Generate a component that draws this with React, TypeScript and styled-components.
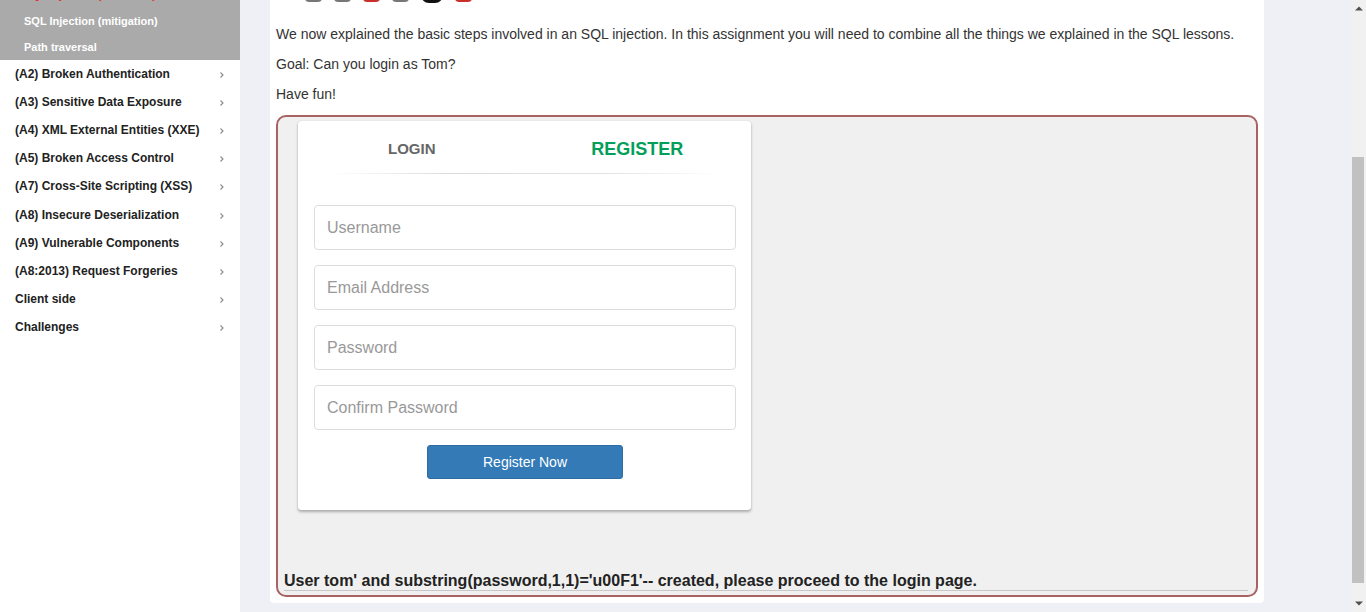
import React from "react";
import styled, { createGlobalStyle } from "styled-components";

const GlobalStyle = createGlobalStyle`
  html, body {
    margin: 0;
    padding: 0;
    overflow: hidden;
  }
  body {
    font-family: "Liberation Sans", Arial, sans-serif;
    background: #eff0f5;
  }
  * {
    box-sizing: border-box;
  }
`;

const Page = styled.div`
  display: flex;
  width: 1366px;
  height: 612px;
  overflow: hidden;
`;

const Sidebar = styled.nav`
  width: 240px;
  flex-shrink: 0;
  background: #fff;
`;

const SubMenu = styled.div`
  margin-top: -18px;
  background: #aaaaaa;
`;

const SubItem = styled.div<{ active?: boolean }>`
  height: 26px;
  line-height: 26px;
  padding-left: 24px;
  font-size: 11px;
  font-weight: 700;
  color: ${(p) => (p.active ? "#e32d2d" : "#fff")};
`;

const MenuItem = styled.div`
  display: flex;
  align-items: center;
  justify-content: space-between;
  height: 28.1px;
  padding: 0 15px 0 15px;
  font-size: 12px;
  font-weight: 700;
  color: #222;
`;

const Chevron = () => (
  <svg width="6" height="8" viewBox="0 0 6 8" style={{ marginTop: 2 }}>
    <polyline points="1.5,1.5 4,4 1.5,6.5" fill="none" stroke="#8a8a8a" strokeWidth="1.1" />
  </svg>
);

const Main = styled.main`
  flex: 1;
  background: #eff0f5;
  padding-left: 30px;
`;

const Panel = styled.section`
  width: 994px;
  background: #fff;
  border-radius: 0 0 4px 4px;
  padding: 0 6px 6px;
`;

const Pager = styled.div`
  display: flex;
  align-items: flex-start;
  gap: 12px;
  height: 24px;
  padding-left: 29px;
`;

const PageBtn = styled.span<{ tone: "gray" | "red" | "current" }>`
  display: block;
  width: ${(p) => (p.tone === "current" ? "22px" : "17px")};
  height: 20px;
  margin-top: ${(p) => (p.tone === "current" ? "-17px" : "-18px")};
  border-radius: ${(p) => (p.tone === "current" ? "8px" : "4px")};
  background: ${(p) =>
    p.tone === "red" ? "#c9302c" : p.tone === "current" ? "#c9302c" : "#777"};
  border: ${(p) => (p.tone === "current" ? "3px solid #111" : "none")};
`;

const Para = styled.p`
  margin: 0 0 10px;
  font-size: 14px;
  line-height: 20px;
  color: #333;
`;

const Attack = styled.div`
  display: flex;
  flex-direction: column;
  margin-top: 11px;
  width: 982px;
  height: 482px;
  border: 2px solid #a96262;
  border-radius: 10px;
  background: #f0f0f0;
  padding: 4px 6px 4px 6px;
`;

const Card = styled.div`
  width: 453px;
  height: 389px;
  margin-left: 14px;
  background: #fff;
  border-radius: 3px;
  box-shadow: 0 2px 3px rgba(0, 0, 0, 0.28), 0 0 1px rgba(0, 0, 0, 0.2);
  padding: 16px 15px 0 16px;
`;

const Tabs = styled.div`
  display: grid;
  grid-template-columns: 1fr 1fr;
  height: 22px;
  align-items: center;
  margin-right: -14px;
  margin-left: -15px;
`;

const Tab = styled.div<{ active?: boolean }>`
  text-align: center;
  font-weight: 700;
  font-size: ${(p) => (p.active ? "18px" : "15px")};
  color: ${(p) => (p.active ? "#029f5b" : "#666")};
  margin-top: ${(p) => (p.active ? "2px" : "0")};
`;

const Divider = styled.div`
  height: 1px;
  margin: 14px 16px 0 16px;
  background: linear-gradient(to right, rgba(0, 0, 0, 0), #dcdcdc 30%, #e2e2e2 70%, rgba(0, 0, 0, 0));
`;

const Form = styled.form`
  display: flex;
  flex-direction: column;
  gap: 15px;
  margin-top: 31px;
`;

const Input = styled.input`
  width: 422px;
  height: 45px;
  border: 1px solid #ddd;
  border-radius: 4px;
  padding: 0 12px;
  font-family: "Liberation Sans", Arial, sans-serif;
  font-size: 16px;
  color: #555;
  background: #fff;
  outline: none;
  &::placeholder {
    color: #999;
  }
`;

const Submit = styled.button`
  align-self: center;
  width: 196px;
  height: 34px;
  border: 1px solid #2e6da4;
  border-radius: 3px;
  background: #337ab7;
  color: #fff;
  font-family: "Liberation Sans", Arial, sans-serif;
  font-size: 14px;
  margin-top: 0;
`;

const Feedback = styled.div`
  margin-top: auto;
`;

const FeedbackText = styled.div`
  font-size: 16px;
  font-weight: 700;
  line-height: 18px;
  color: #222;
`;

const FeedbackRule = styled.div`
  height: 1px;
  margin-top: 0;
  margin-right: 2px;
  background: #c8c8c8;
`;

const ScrollRail = styled.div`
  display: flex;
  flex-direction: column;
  width: 15px;
  flex-shrink: 0;
  background: #f1f1f1;
`;

const RailButton = styled.div`
  display: flex;
  align-items: center;
  justify-content: center;
  height: 17px;
`;

const RailTrack = styled.div`
  flex: 1;
  display: flex;
  flex-direction: column;
  padding: 140px 2px 12px 1px;
`;

const Thumb = styled.div`
  flex: 1;
  background: #c1c1c1;
`;

const sideItems = [
  "(A2) Broken Authentication",
  "(A3) Sensitive Data Exposure",
  "(A4) XML External Entities (XXE)",
  "(A5) Broken Access Control",
  "(A7) Cross-Site Scripting (XSS)",
  "(A8) Insecure Deserialization",
  "(A9) Vulnerable Components",
  "(A8:2013) Request Forgeries",
  "Client side",
  "Challenges",
];

const pages: Array<"gray" | "red" | "current"> = ["gray", "gray", "red", "gray", "current", "red"];

export default function App() {
  return (
    <>
      <GlobalStyle />
      <Page>
        <Sidebar>
          <SubMenu>
            <SubItem active>SQL Injection (advanced)</SubItem>
            <SubItem>SQL Injection (mitigation)</SubItem>
            <SubItem>Path traversal</SubItem>
          </SubMenu>
          {sideItems.map((label) => (
            <MenuItem key={label}>
              <span>{label}</span>
              <Chevron />
            </MenuItem>
          ))}
        </Sidebar>

        <Main>
          <Panel>
            <Pager>
              {pages.map((tone, i) => (
                <PageBtn key={i} tone={tone} />
              ))}
            </Pager>
            <Para>
              We now explained the basic steps involved in an SQL injection. In this assignment you will
              need to combine all the things we explained in the SQL lessons.
            </Para>
            <Para>Goal: Can you login as Tom?</Para>
            <Para>Have fun!</Para>

            <Attack>
              <Card>
                <Tabs>
                  <Tab>LOGIN</Tab>
                  <Tab active>REGISTER</Tab>
                </Tabs>
                <Divider />
                <Form onSubmit={(e) => e.preventDefault()}>
                  <Input placeholder="Username" />
                  <Input placeholder="Email Address" />
                  <Input placeholder="Password" type="password" />
                  <Input placeholder="Confirm Password" type="password" />
                  <Submit type="submit">Register Now</Submit>
                </Form>
              </Card>
              <Feedback>
                <FeedbackText>
                  User tom' and substring(password,1,1)='u00F1'-- created, please proceed to the login page.
                </FeedbackText>
                <FeedbackRule />
              </Feedback>
            </Attack>
          </Panel>
        </Main>

        <ScrollRail>
          <RailButton>
            <svg width="8" height="5" viewBox="0 0 8 5">
              <polygon points="0,4.5 4,0.5 8,4.5" fill="#505050" />
            </svg>
          </RailButton>
          <RailTrack>
            <Thumb />
          </RailTrack>
          <RailButton>
            <svg width="8" height="5" viewBox="0 0 8 5">
              <polygon points="0,0.5 8,0.5 4,4.5" fill="#505050" />
            </svg>
          </RailButton>
        </ScrollRail>
      </Page>
    </>
  );
}
